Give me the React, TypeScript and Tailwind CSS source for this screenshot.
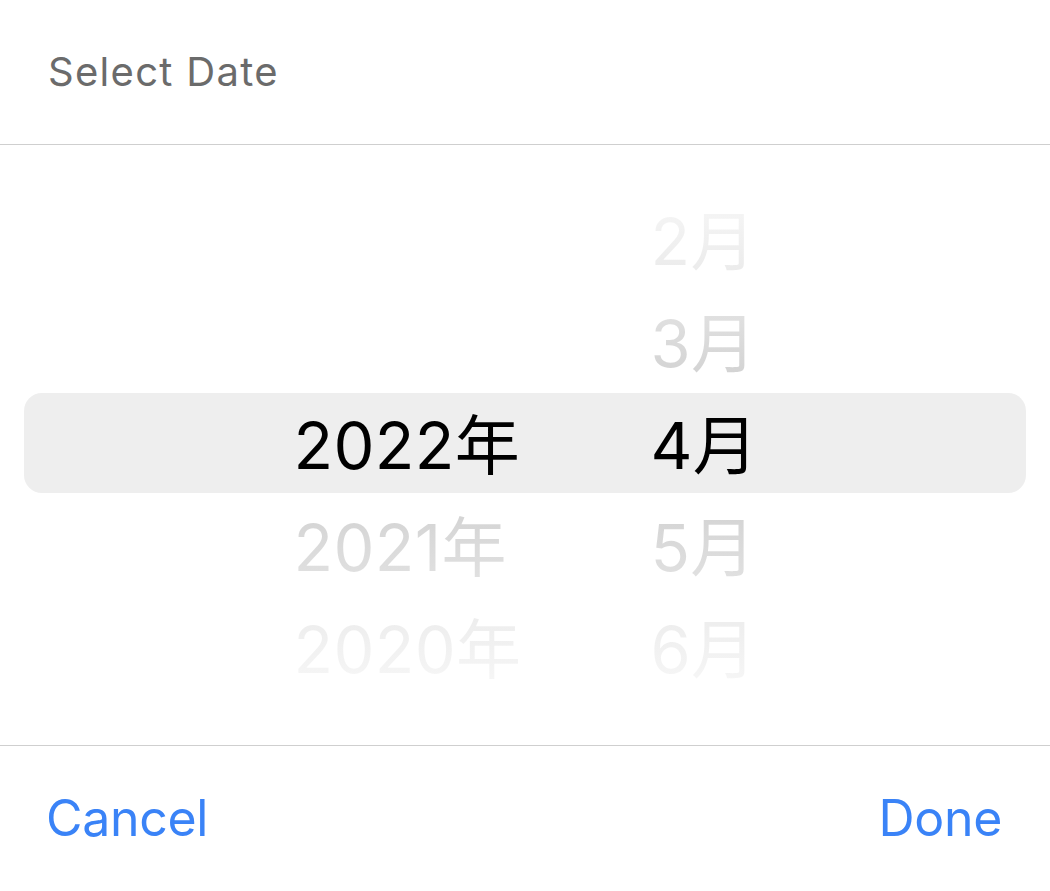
import React from "react";

type Cell = { text: string; cls: string } | null;

const years: Cell[] = [
  null,
  null,
  { text: "2022年", cls: "text-black" },
  { text: "2021年", cls: "bg-linear-to-b from-[#d3d3d3] to-[#e2e2e2] bg-clip-text text-transparent" },
  { text: "2020年", cls: "bg-linear-to-b from-[#ececec] to-[#f7f7f7] bg-clip-text text-transparent" },
];

const months: Cell[] = [
  { text: "2月", cls: "bg-linear-to-b from-[#f6f6f6] to-[#eaeaea] bg-clip-text text-transparent" },
  { text: "3月", cls: "bg-linear-to-b from-[#e3e3e3] to-[#d1d1d1] bg-clip-text text-transparent" },
  { text: "4月", cls: "text-black" },
  { text: "5月", cls: "bg-linear-to-b from-[#d3d3d3] to-[#e2e2e2] bg-clip-text text-transparent" },
  { text: "6月", cls: "bg-linear-to-b from-[#ececec] to-[#f7f7f7] bg-clip-text text-transparent" },
];

function Column({ cells, width }: { cells: Cell[]; width: string }) {
  return (
    <div className={`flex flex-col ${width}`}>
      {cells.map((c, i) => (
        <div key={i} className="h-[102px] flex items-center whitespace-nowrap">
          {c && <span className={`inline-block leading-none py-2 whitespace-nowrap ${c.cls}`}>{c.text}</span>}
        </div>
      ))}
    </div>
  );
}

export default function App() {
  return (
    <div
      className="w-[1050px] h-[891px] bg-white flex flex-col"
      style={{ fontFamily: 'Inter, "Noto Sans CJK JP", sans-serif' }}
    >
      <div className="h-[145px] border-b border-[#cfcfcf] flex items-center px-[48px] shrink-0">
        <span className="text-[40px] text-[#6b6b6b] tracking-[1.3px]">Select Date</span>
      </div>
      <div className="relative h-[600px] shrink-0 flex items-center justify-center">
        <div className="absolute left-[24px] right-[24px] top-[248px] h-[100px] rounded-[18px] bg-[#eeeeee]" />
        <div className="relative flex text-[65px] ml-[4px] tracking-[0.3px]">
          <Column cells={years} width="w-[357px]" />
          <Column cells={months} width="w-[110px]" />
        </div>
      </div>
      <div className="flex-1 border-t border-[#cfcfcf] flex items-center justify-between pl-[46px] pr-[48px]">
        <span className="text-[50px] tracking-[-0.3px] text-[#3a83f7]">Cancel</span>
        <span className="text-[50px] tracking-[-0.3px] text-[#3a83f7]">Done</span>
      </div>
    </div>
  );
}
